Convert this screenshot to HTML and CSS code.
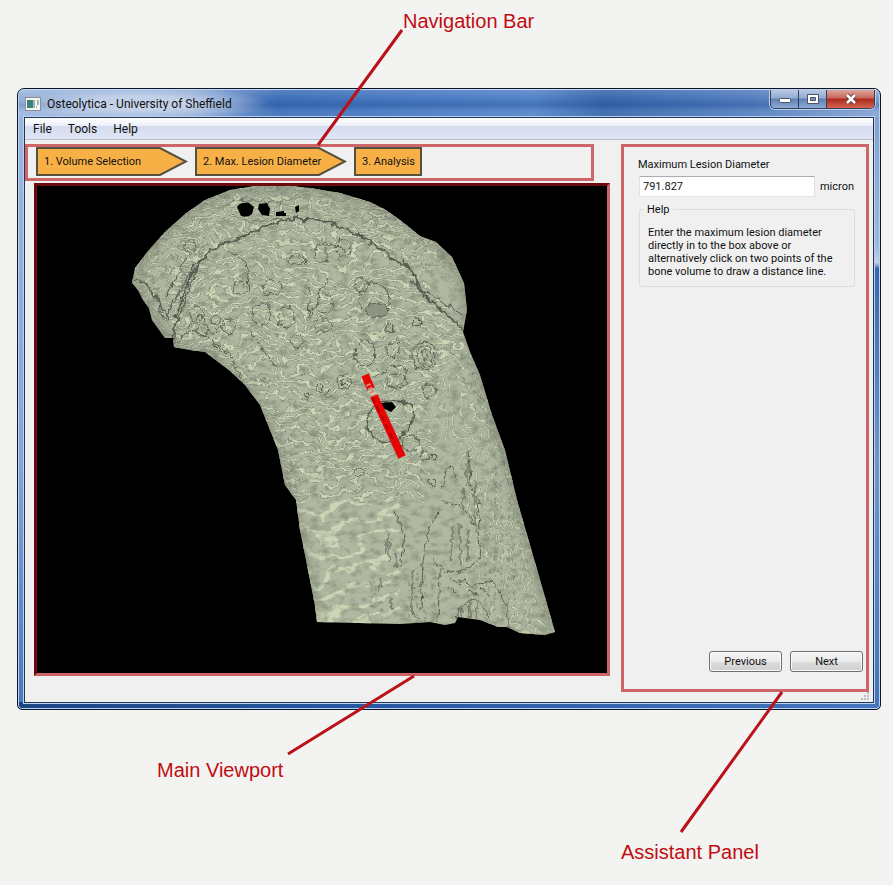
FILE: index.html
```html
<!DOCTYPE html>
<html lang="en">
<head>
<meta charset="utf-8">
<title>Osteolytica - University of Sheffield</title>
<link rel="stylesheet" href="styles.css">
</head>
<body>
<figure class="figure">
  <section class="window">
    <header class="titlebar">
      <svg class="app-icon" width="16" height="14" viewBox="0 0 16 14" aria-hidden="true">
        <rect x=".5" y=".5" width="15" height="13" fill="#f4f4f0" stroke="#8a8f96"/>
        <rect x="2" y="3" width="6" height="8" fill="#3f8178"/>
        <path d="M8 3h2v8H8z" fill="#9fb9b4"/>
        <path d="M13 3v5M11 10h1" stroke="#3f8178"/>
      </svg>
      <h1 class="title">Osteolytica - University of Sheffield</h1>
      <div class="caption-buttons">
        <button class="caption" type="button" aria-label="Minimize"><svg width="14" height="10" viewBox="0 0 14 10"><rect x="1.500" y="4.500" width="11" height="4" rx="1" fill="#fff" stroke="#49536a"/></svg></button>
        <button class="caption" type="button" aria-label="Maximize"><svg width="14" height="12" viewBox="0 0 14 12"><path d="M1.500 1.500h11v9h-11z" fill="#fff" stroke="#49536a"/><path d="M4.500 4.500h5v3h-5z" fill="#7c94bd" stroke="#49536a"/></svg></button>
        <button class="caption close" type="button" aria-label="Close"><svg width="14" height="12" viewBox="0 0 14 12"><path d="M3 2l8 8M11 2l-8 8" stroke="#5a3038" stroke-width="4.500"/><path d="M3 2l8 8M11 2l-8 8" stroke="#fff" stroke-width="2.600"/></svg></button>
      </div>
    </header>
    <div class="client">
      <nav class="menubar" aria-label="Menu">
        <button type="button">File</button>
        <button type="button">Tools</button>
        <button type="button">Help</button>
      </nav>
      <main class="workspace">
        <div class="stage">
          <nav class="steps" aria-label="Steps">
            <button class="step" type="button"><svg width="152" height="29" viewBox="0 0 152 29"><path d="M1 1H124L150 14.500L124 28H1z"/></svg><span>1. Volume Selection</span></button>
            <button class="step" type="button"><svg width="152" height="29" viewBox="0 0 152 29"><path d="M1 1H124L150 14.500L124 28H1z"/></svg><span>2. Max. Lesion Diameter</span></button>
            <button class="step" type="button"><svg width="68" height="29" viewBox="0 0 68 29"><path d="M1 1H67V28H1z"/></svg><span>3. Analysis</span></button>
          </nav>
          <div class="viewport">
            <svg class="scene" viewBox="37 186 570 487" role="img" aria-label="Bone volume with distance line">
              <defs>
                <clipPath id="bone"><path d="M132 283L135 268L148 251L165 232L185 214L205 200L230 190L255 186H290L310 188L340 193L370 202L386 210L404 223L420 236L436 242L452 257L464 283L467 310L463 332L470 352L480 375L492 415L505 450L517 500L530 545L543 590L555 632L545 635L520 633L507 627H498L480 620L458 617L455 623L445 625L430 622L400 624L317 622L315 606L310 580L300 530L296 500L285 485L278 450L270 430L260 405L245 385L230 371L205 352L190 350L174 347L173 338H165L152 320L149 308L143 300L138 290z"/></clipPath>
                <pattern id="strata" patternUnits="userSpaceOnUse" x="250" y="0" width="160" height="9">
                  <g id="wave" fill="none">
                    <path id="w" d="M0 -9L18 -5L36 3L50 2L72 10L90 7L112 -1L130 -4L160 -9" stroke="#757c6b" stroke-width="3.600"/>
                    <use href="#w" y="9"/><use href="#w" y="18"/><use href="#w" y="-9"/>
                    <path id="l" d="M0 -9L18 -5L36 3L50 2L72 10L90 7L112 -1L130 -4L160 -9" stroke="#cbd6b7" stroke-width="2.600"/>
                    <use href="#l" y="9"/><use href="#l" y="18"/><use href="#l" y="-9"/>
                  </g>
                </pattern>
                <pattern id="wide-strata" patternUnits="userSpaceOnUse" x="240" y="0" width="180" height="21">
                  <path id="v" d="M0 -26L30 -18L60 6L80 14L105 2L130 -7L180 -26" fill="none" stroke="#cbd6b7" stroke-width="5"/>
                  <use href="#v" y="21"/><use href="#v" y="42"/>
                </pattern>
                <pattern id="cap-strata" patternUnits="userSpaceOnUse" width="90" height="7">
                  <path d="M0 3H30L45 2L60 4L90 3" fill="none" stroke="#757c6b" stroke-width="2.800"/>
                  <path d="M0 3H30L45 2L60 4L90 3" fill="none" stroke="#c6d1b3" stroke-width="2"/>
                </pattern>
                <pattern id="side-strata" patternUnits="userSpaceOnUse" width="140" height="10">
                  <path d="M0 3L40 5L80 2L140 3" fill="none" stroke="#757c6b" stroke-width="3"/>
                  <path d="M0 3L40 5L80 2L140 3" fill="none" stroke="#cbd6b7" stroke-width="2.200"/>
                </pattern>
                <filter id="bend" filterUnits="userSpaceOnUse" x="100" y="160" width="500" height="510" color-interpolation-filters="sRGB">
                  <feTurbulence type="fractalNoise" baseFrequency=".025 .035" numOctaves="4" seed="8" result="t"/>
                  <feDisplacementMap in="SourceGraphic" in2="t" scale="42" xChannelSelector="R" yChannelSelector="G"/>
                </filter>
                <filter id="grain" filterUnits="userSpaceOnUse" x="120" y="180" width="450" height="470" color-interpolation-filters="sRGB">
                  <feTurbulence type="fractalNoise" baseFrequency=".1 .16" numOctaves="3" seed="4"/>
                  <feColorMatrix values="0 0 0 0 .5  0 0 0 0 .54  0 0 0 0 .45  1.800 0 0 0 -.8"/>
                </filter>
                <filter id="rough" filterUnits="userSpaceOnUse" x="120" y="180" width="450" height="470" color-interpolation-filters="sRGB">
                  <feTurbulence type="fractalNoise" baseFrequency=".16" numOctaves="2" seed="3" result="t"/>
                  <feDisplacementMap in="SourceGraphic" in2="t" scale="8" xChannelSelector="R" yChannelSelector="G"/>
                </filter>
                <filter id="soft"><feGaussianBlur stdDeviation="5"/></filter>
              </defs>
              <g clip-path="url(#bone)">
                <path d="M120 180h450v470H120z" fill="#b0b8a2"/>
                <g filter="url(#bend)">
                  <path d="M100 160H480V300L420 270L330 225L240 235L190 280L170 360H100z" fill="url(#cap-strata)"/>
                  <path d="M190 280L240 235L330 225L420 270L470 320L430 400V500H270L230 370L160 350z" fill="url(#strata)"/>
                  <path d="M270 500H400V650H290z" fill="url(#wide-strata)"/>
                  <g transform="rotate(70 460 400)"><path d="M380 340H720V425H440z" fill="url(#side-strata)"/></g>
                  <g transform="rotate(88 420 560)"><path d="M365 520H510V450H365z" fill="url(#side-strata)" opacity=".7"/></g>
                </g>
                <rect x="120" y="180" width="450" height="470" filter="url(#grain)"/>
                <path d="M132 283L148 251L185 214L230 190L310 188L370 202L436 242L464 283L467 320L480 375L517 500L555 632M317 622L300 530L278 450L245 385L205 352L174 347L132 283" fill="none" stroke="#6e7566" stroke-width="7" opacity=".6" filter="url(#soft)"/>
                <g class="relief" filter="url(#rough)">
                  <path d="M173 345C174 315 182 300 188 283S202 258 212 250S245 236 265 227S286 219 306 219S350 230 370 242S392 260 404 265S414 283 420 291S440 310 449 316S460 325 466 333" stroke-width="2"/>
                  <path d="M165 318C176 300 186 280 194 264M177 322C186 300 190 284 198 265M166 296L186 260M144 282L158 298L162 318M134 278L148 286L170 320M410 280C424 296 440 296 452 308L466 316M402 260C420 278 418 296 444 311" stroke-width="1.300"/>
                  <path d="M220 242L236 240L250 234M228 250L246 262L250 292M174 344L192 330L206 336L222 352M206 336L232 357L242 384M250 330L262 350L276 366M312 250L325 242L345 250M180 340L200 315L212 334L230 320"/>
                  <path d="M224 206Q240 198 250 201L280 202L276 208M232 214L250 222L282 218" opacity=".7"/>
                  <ellipse cx="321" cy="254" rx="6" ry="9"/><circle cx="343" cy="247" r="8"/><ellipse cx="297" cy="260" rx="9" ry="5"/>
                  <ellipse cx="272" cy="287" rx="10" ry="8"/><ellipse cx="286" cy="317" rx="8" ry="11"/><ellipse cx="262" cy="314" rx="10" ry="11"/>
                  <ellipse cx="325" cy="303" rx="8" ry="10"/><ellipse cx="323" cy="325" rx="9" ry="7"/><path d="M310 288L308 318L320 300M330 278L318 294"/>
                  <ellipse cx="374" cy="299" rx="15" ry="16"/><ellipse cx="377" cy="310" rx="11" ry="7" fill="#8d9481"/><circle cx="361" cy="284" r="7"/>
                  <circle cx="390" cy="328" r="4"/><circle cx="416" cy="322" r="4"/><circle cx="397" cy="341" r="3"/><circle cx="297" cy="341" r="7"/>
                  <ellipse cx="365" cy="353" rx="10" ry="13"/><ellipse cx="393" cy="350" rx="6" ry="7"/><ellipse cx="424" cy="356" rx="12" ry="14"/><ellipse cx="425" cy="356" rx="8" ry="10"/><ellipse cx="425" cy="355" rx="3" ry="6"/>
                  <path d="M373 378L398 364Q408 366 406 376Q404 386 384 389"/><ellipse cx="397" cy="381" rx="9" ry="7"/><circle cx="344" cy="382" r="7"/><circle cx="344" cy="382" r="3"/><circle cx="429" cy="391" r="7"/>
                  <circle cx="196" cy="314" r="7"/><circle cx="229" cy="326" r="7"/><circle cx="202" cy="330" r="6"/><circle cx="216" cy="320" r="5"/><circle cx="240" cy="288" r="7"/><circle cx="190" cy="246" r="6"/>
                  <path d="M373 407C382 399 406 400 413 406C417 418 408 432 396 440C378 446 367 436 367 421Q367 414 373 407z" stroke-width="1.800"/>
                  <ellipse cx="411" cy="443" rx="9" ry="8"/><circle cx="425" cy="456" r="4"/><circle cx="434" cy="457" r="3"/><circle cx="329" cy="395" r="3"/><circle cx="319" cy="388" r="3"/><circle cx="308" cy="396" r="3"/><circle cx="359" cy="473" r="5"/><circle cx="432" cy="482" r="3"/>
                  <path d="M442 489L450 465L457 480M468 450L470 485L478 500L480 530M440 502C454 500 472 510 478 535S480 560 466 569S438 568 432 558M440 510L428 530L423 562L421 610M452 525V560M460 522V565M468 530V562M394 510L405 535L400 566M412 570L412 612L419 618M455 622Q460 604 470 600T490 618M460 580L472 586L492 580L508 606L508 627M440 570L438 620M462 608V620M469 602V620M477 604V620"/>
                  <path d="M452 580l8 4M447 587l10 5M468 592l10 2M481 587l7 8M386 540v14M396 552v16M380 578v15M392 598v12M467 465v20M475 480v24M463 488v20M475 510v15M389 532v30"/>
                </g>
                <g class="relief" opacity=".5" stroke-dasharray="5 4 2 6" filter="url(#rough)">
                  <path d="M495 465V620M490 500V618M502 480V625M508 498V626M514 510V630M485 530V612M408 580V622M417 570V622M425 575V622M433 568V622M371 580V622M382 600V622M260 400C268 430 277 430 283 446L301 485M255 380L275 410L291 445M248 370L275 391M469 365L500 448L520 525M460 350L492 435M449 345L480 420"/>
                </g>
              </g>
              <g fill="#000">
                <path d="M237 207Q240 202 249 203L254 207L252 214Q248 218 241 216z"/>
                <path d="M259 204L267 203L270 209L269 216L262 215L258 209z"/>
                <path d="M276 212L284 211V213H286V216H276z"/><path d="M295 207L299 205V211L296 213z"/>
                <path d="M381 403L392 402L396 407L391 412L383 408z"/>
              </g>
              <g fill="none" stroke="#e80505">
                <path d="M365 375L371 389" stroke-width="8"/>
                <path d="M368 384L375 399" stroke-width="5" stroke="#e08070" stroke-dasharray="2 2"/>
                <path d="M374 396L402 457" stroke-width="8"/>
                <path d="M372 397L395 443" stroke-width="2" stroke="#b80000" stroke-dasharray="7 3"/>
              </g>
            </svg>
          </div>
        </div>
        <form class="assistant">
          <label for="diameter">Maximum Lesion Diameter</label>
          <div class="measure">
            <input id="diameter" type="text" value="791.827">
            <span>micron</span>
          </div>
          <fieldset class="help">
            <legend>Help</legend>
            <p>Enter the maximum lesion diameter<br>directly in to the box above or<br>alternatively click on two points of the<br>bone volume to draw a distance line.</p>
          </fieldset>
          <div class="actions">
            <button type="button">Previous</button>
            <button type="button">Next</button>
          </div>
        </form>
      </main>
      <div class="statusbar"><svg width="9" height="9" viewBox="0 0 9 9" fill="#b9bcc2" aria-hidden="true"><path d="M6 0h2v2H6zM3 3h2v2H3zM6 3h2v2H6zM0 6h2v2H0zM3 6h2v2H3zM6 6h2v2H6z"/></svg></div>
    </div>
  </section>
  <svg class="leaders" width="893" height="885" viewBox="0 0 893 885" aria-hidden="true">
    <path d="M402 30L318 145M414 676L288 754M782 692L681 832"/>
  </svg>
  <span class="note note-nav">Navigation Bar</span>
  <span class="note note-view">Main Viewport</span>
  <span class="note note-panel">Assistant Panel</span>
</figure>
</body>
</html>
```

FILE: styles.css
```css
* { box-sizing: border-box; }

body {
  margin: 0;
  background: #f3f3f1;
  color: #111;
  font: 11px/13px Roboto, "Noto Sans", sans-serif;
}

button, input { font: inherit; color: inherit; }

.figure {
  position: relative;
  margin: 0;
  padding: 88px 12px 175px 17px;
}

.window {
  border: 1px solid #0c1628;
  border-radius: 7px 7px 5px 5px;
  padding: 0 6px 6px;
  background:
    linear-gradient(90deg, #1c4584, #2a5da8 50%, #4676bc) bottom / 100% 7px no-repeat,
    linear-gradient(#7e9dce, #9db6dc 25%, #bfd0e8 28%, #3866ae 29%, #7296ca 60%, #4373b8) right / 7px 100% no-repeat,
    linear-gradient(#9db8df, #86a5d6 60%, #4876bd);
  box-shadow: inset 0 0 0 1px #b9d3f2;
}

.titlebar {
  display: flex;
  align-items: center;
  height: 28px;
  margin: 0 -5px;
  padding-left: 6px;
  background:
    radial-gradient(ellipse 130px 18px at 120px 50%, #c2d0e8 40%, #c2d0e800),
    linear-gradient(#ffffff20, #1a489020 40%, #1a489050 55%, #ffffff10 80%),
    linear-gradient(90deg, #9db8df, #83a3d4 20%, #3f70ba 30%, #5585cb 60%, #3867ad 68%, #5580c0 85%, #86a4d3);
  border-top: 1px solid #c5daf4;
  border-radius: 6px 6px 0 0;
}

.app-icon { margin-right: 6px; }

.title {
  flex: 1;
  margin: 0;
  font: 12px/16px Roboto, "Noto Sans", sans-serif;
  white-space: nowrap;
}

.caption-buttons {
  display: flex;
  align-self: flex-start;
  margin-right: 4px;
  border: 1px solid #33415f;
  border-top: 0;
  border-radius: 0 0 5px 5px;
  overflow: hidden;
  box-shadow: 0 0 0 1px #bdd0ec;
}

.caption {
  display: grid;
  place-items: center;
  width: 28px;
  height: 18px;
  padding: 0;
  border: 0;
  border-right: 1px solid #33415f;
  background: linear-gradient(#b9c9e2, #93aad0 45%, #5f7fb4 50%, #8dabd6);
}

.caption.close {
  width: 47px;
  border-right: 0;
  background: linear-gradient(#dda69d, #c9665a 45%, #ab2a1c 50%, #d4664f);
}

.client {
  border: 1px solid #24364f;
  background: #f0f0f0;
  box-shadow: 0 0 0 1px #b9d3f2;
}

.menubar {
  display: flex;
  gap: 16px;
  height: 22px;
  padding-left: 8px;
  border-bottom: 1px solid #b6bccc;
  background: linear-gradient(#fff, #eef1f9 35%, #d5dcee 40%, #dfe5f4);
}

.menubar button {
  padding: 0;
  border: 0;
  background: none;
  font: 12px/20px Roboto, "Noto Sans", sans-serif;
}

.workspace {
  display: grid;
  grid-template-columns: 1fr 248px;
  gap: 11px;
  padding: 4px 4px 0 0;
}

.stage { padding-bottom: 16px; }

.steps {
  display: flex;
  gap: 7px;
  margin-right: 16px;
  padding: 0 8px 2px;
  border: 3px solid #cd6669;
}

.step {
  display: grid;
  align-items: center;
  padding: 0;
  border: 0;
  background: none;
  text-align: left;
}

.step > * { grid-area: 1 / 1; }
.step span { padding-left: 8px; }
.step svg { display: block; }
.step path { fill: #f7b046; stroke: #55503f; stroke-width: 2; }

.viewport {
  margin: 2px 0 0 9px;
  border: 3px solid;
  border-color: #6b090c #cd6366 #cd6366 #6b090c;
  background: #000;
}

.scene { display: block; width: 100%; }
.relief { fill: none; stroke: #565d50; stroke-width: 1; }

.assistant {
  display: flex;
  flex-direction: column;
  padding: 11px 3px 17px 14px;
  border: 3px solid #cd6669;
}

.measure {
  display: flex;
  align-items: center;
  gap: 5px;
  margin: 5px 9px 0 1px;
}

.measure input {
  flex: 1;
  min-width: 0;
  height: 21px;
  padding: 0 3px;
  border: 1px solid #dfe3e9;
  border-top-color: #abadb3;
  background: #fff;
}

.help {
  margin: 6px 8px 0 1px;
  padding: 10px 8px 8px;
  border: 1px solid #d5dfe5;
  border-radius: 3px;
}

.help legend { margin-left: -4px; padding: 0 3px; }
.help p { margin: 0; white-space: nowrap; }

.actions {
  display: flex;
  justify-content: flex-end;
  gap: 8px;
  margin-top: auto;
}

.actions button {
  width: 73px;
  height: 21px;
  padding: 0;
  border: 1px solid #707070;
  border-radius: 3px;
  background: linear-gradient(#f4f4f4, #ebebeb 50%, #dcdcdc 50%, #cfcfcf);
  box-shadow: inset 0 0 0 1px #fafafa;
}

.statusbar {
  display: flex;
  justify-content: flex-end;
  height: 10px;
  padding-right: 3px;
}

.leaders {
  position: absolute;
  inset: 0 auto auto 0;
  fill: none;
  stroke: #b91218;
  stroke-width: 3;
}

.note {
  position: absolute;
  color: #c00d12;
  font: 20px/24px "Liberation Sans", sans-serif;
  white-space: nowrap;
}

.note-nav { left: 403px; top: 9px; }
.note-view { left: 157px; top: 758px; }
.note-panel { left: 621px; top: 840px; }
```
